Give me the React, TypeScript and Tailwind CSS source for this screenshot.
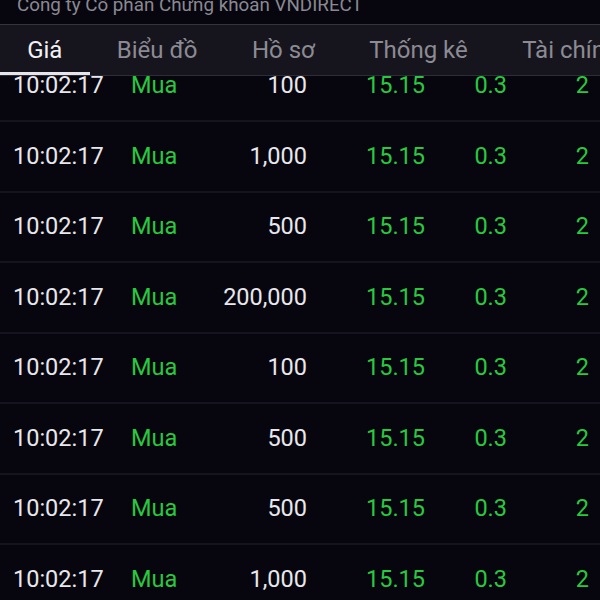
import React from "react";

const rows = [
  ["10:02:17", "Mua", "100", "15.15", "0.3", "2"],
  ["10:02:17", "Mua", "1,000", "15.15", "0.3", "2"],
  ["10:02:17", "Mua", "500", "15.15", "0.3", "2"],
  ["10:02:17", "Mua", "200,000", "15.15", "0.3", "2"],
  ["10:02:17", "Mua", "100", "15.15", "0.3", "2"],
  ["10:02:17", "Mua", "500", "15.15", "0.3", "2"],
  ["10:02:17", "Mua", "500", "15.15", "0.3", "2"],
  ["10:02:17", "Mua", "1,000", "15.15", "0.3", "2"],
  ["10:02:17", "Mua", "500", "15.15", "0.3", "2"],
];

const tabs = ["Giá", "Biểu đồ", "Hồ sơ", "Thống kê", "Tài chính"];

export default function App() {
  return (
    <div
      className="w-[600px] h-[600px] overflow-hidden bg-[#07060f] flex flex-col"
      style={{ fontFamily: "Roboto, 'Noto Sans', sans-serif" }}
    >
      <div className="h-[24px] shrink-0 overflow-hidden relative">
        <div className="absolute left-[17px] top-[-7px] text-[18.8px] leading-[24px] text-[#8a8992] whitespace-nowrap">
          Công ty Cổ phần Chứng khoán VNDIRECT
        </div>
      </div>
      <div className="shrink-0 border-t border-[#34333d] bg-[#16151d] flex h-[51px] whitespace-nowrap">
        {tabs.map((t, i) => (
          <div
            key={t}
            className={`relative px-[27.2px] flex items-center text-[24px] ${
              i === 0 ? "text-[#f2f2f4]" : "text-[#8c8b94]"
            }`}
          >
            {t}
            {i === 0 && (
              <div className="absolute left-0 right-0 bottom-0 h-[3px] bg-[#e6e6ea]" />
            )}
          </div>
        ))}
      </div>
      <div className="h-[1px] bg-[#2e2d37] shrink-0" />
      <div className="flex-1 overflow-hidden">
        <div className="-mt-[24.5px]">
          {rows.map((r, i) => (
            <div
              key={i}
              className="h-[70.5px] flex items-center border-b-2 border-[#15141e] pl-[13px] text-[23.5px] whitespace-nowrap"
            >
              <div className="w-[118px] text-[#e8e8ec]">{r[0]}</div>
              <div className="w-[70px] text-[#27c93f]">{r[1]}</div>
              <div className="w-[106px] text-right text-[#e8e8ec]">{r[2]}</div>
              <div className="w-[118px] text-right text-[#27c93f]">{r[3]}</div>
              <div className="w-[82px] text-right text-[#27c93f]">{r[4]}</div>
              <div className="w-[82px] text-right text-[#27c93f]">{r[5]}</div>
            </div>
          ))}
        </div>
      </div>
    </div>
  );
}
